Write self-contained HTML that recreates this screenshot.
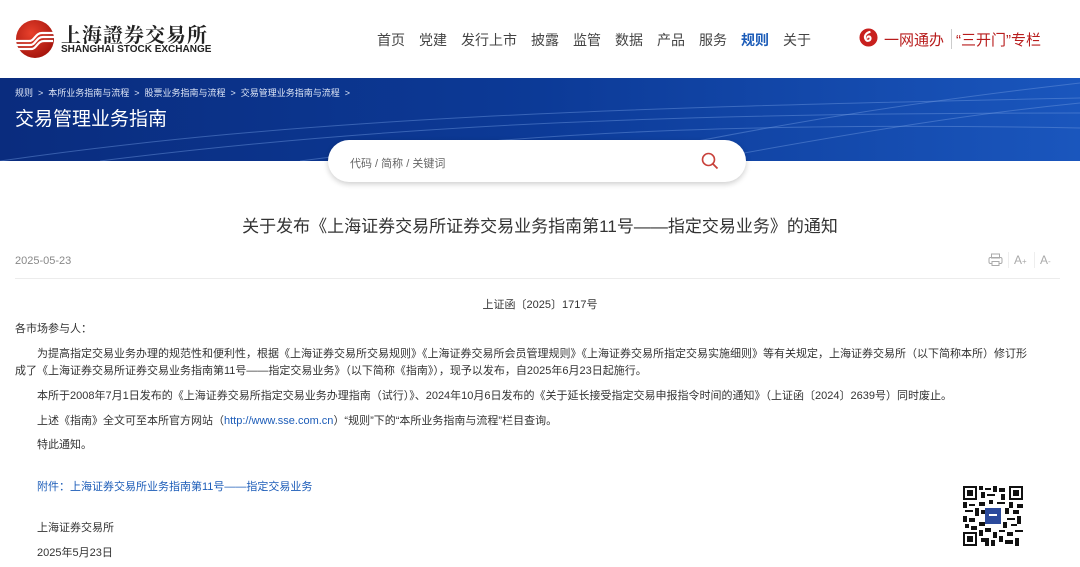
<!DOCTYPE html>
<html><head><meta charset="utf-8"><style>
*{margin:0;padding:0;box-sizing:border-box}
body{width:1080px;height:567px;overflow:hidden;background:#fff;font-family:"Liberation Sans","Noto Sans CJK SC",sans-serif;position:relative;color:#333}
.a{position:absolute;white-space:nowrap}
.nav span{margin-right:14px}
.t{font-size:11px;color:#333}
</style></head><body>
<svg class="a" style="left:15px;top:19px" width="40" height="40" viewBox="0 0 40 40">
<defs><radialGradient id="g" cx="40%" cy="35%" r="65%"><stop offset="0" stop-color="#e8412c"/><stop offset="1" stop-color="#a8160e"/></radialGradient></defs>
<circle cx="20" cy="20" r="19" fill="url(#g)"/>
<path d="M1 22 H14 C20 22 20 14 27 14 H39 M1 26 H15 C21 26 21 18 28 18 H39 M2 30 H16 C22 30 22 22 29 22 H38" stroke="#fff" stroke-width="2.2" fill="none"/>
</svg>
<div class="a" style="left:61px;top:19px;font-size:20px;font-weight:bold;letter-spacing:1px;color:#222;font-family:'Noto Serif CJK SC',serif">上海證券交易所</div>
<div class="a" style="left:61px;top:44px;font-size:10px;font-weight:bold;color:#222">SHANGHAI STOCK EXCHANGE</div>
<div class="a nav" style="left:377px;top:30px;font-size:14px;color:#444"><span>首页</span><span>党建</span><span>发行上市</span><span>披露</span><span>监管</span><span>数据</span><span>产品</span><span>服务</span><span style="color:#1c5cb8;font-weight:bold">规则</span><span>关于</span></div>
<svg class="a" style="left:859px;top:28px" width="19" height="19" viewBox="0 0 20 20"><circle cx="10" cy="10" r="9.5" fill="#c8201e"/><path d="M12 4 C7 5 5 9 7 12 C9 15 13 13 12 10 C11 8 8 9 9 11" stroke="#fff" stroke-width="2.2" fill="none"/></svg>
<div class="a" style="left:884px;top:29px;font-size:15px;color:#b81c1c">一网通办</div>
<div class="a" style="left:951px;top:29px;width:1px;height:20px;background:#ccc"></div>
<div class="a" style="left:956px;top:29px;font-size:15px;color:#b81c1c">“三开门”专栏</div>
<div class="a" style="left:0;top:78px;width:1080px;height:83px;background:linear-gradient(90deg,#0a2c7e 0%,#0c3a97 50%,#1a56bd 100%);overflow:hidden">
<svg width="1080" height="83" style="position:absolute;left:0;top:0"><g fill="none" stroke="#6f98e0" stroke-opacity=".45">
<path d="M0 83 C300 40 600 30 1080 20"/><path d="M100 83 C400 45 700 35 1080 35"/><path d="M300 83 C550 50 800 45 1080 50"/><path d="M600 83 C800 40 950 20 1080 5"/><path d="M700 83 C880 50 980 35 1080 25"/></g></svg>
<div class="a" style="left:15px;top:8px;font-size:9px;color:#dfe7f7">规则 &nbsp;&gt;&nbsp; 本所业务指南与流程 &nbsp;&gt;&nbsp; 股票业务指南与流程 &nbsp;&gt;&nbsp; 交易管理业务指南与流程 &nbsp;&gt;</div>
<div class="a" style="left:15px;top:26px;font-size:19px;color:#fff">交易管理业务指南</div>
</div>
<div class="a" style="left:328px;top:140px;width:418px;height:42px;background:#fff;border-radius:21px;box-shadow:0 2px 6px rgba(0,0,0,.2)"></div>
<div class="a" style="left:350px;top:155px;font-size:11px;color:#666">代码 / 简称 / 关键词</div>
<svg class="a" style="left:701px;top:152px" width="18" height="18" viewBox="0 0 18 18"><circle cx="7.5" cy="7.5" r="6" stroke="#c8403a" stroke-width="1.6" fill="none"/><path d="M12 12 L16.5 16.5" stroke="#c8403a" stroke-width="1.8"/></svg>
<div class="a" style="left:0;width:1080px;text-align:center;top:212px;font-size:17px;color:#333">关于发布《上海证券交易所证券交易业务指南第11号——指定交易业务》的通知</div>
<div class="a" style="left:15px;top:255px;font-size:11px;color:#888">2025-05-23</div>
<svg class="a" style="left:988px;top:253px" width="15" height="14" viewBox="0 0 15 14"><rect x="3.5" y="1" width="8" height="4" fill="none" stroke="#aaa"/><rect x="1" y="4.5" width="13" height="6" rx="1.5" fill="none" stroke="#aaa"/><rect x="4" y="8.5" width="7" height="4" fill="#fff" stroke="#aaa"/></svg>
<div class="a" style="left:1008px;top:252px;width:1px;height:16px;background:#eee"></div>
<div class="a" style="left:1014px;top:253px;font-size:12px;color:#aaa">A<span style="font-size:8px">+</span></div>
<div class="a" style="left:1034px;top:252px;width:1px;height:16px;background:#eee"></div>
<div class="a" style="left:1040px;top:253px;font-size:12px;color:#aaa">A<span style="font-size:8px">-</span></div>
<div class="a" style="left:15px;top:278px;width:1045px;height:1px;background:#ececec"></div>
<div class="a t" style="left:0;width:1080px;text-align:center;top:296px">上证函〔2025〕1717号</div>
<div class="a t" style="left:15px;top:320px">各市场参与人：</div>
<div class="a t" style="left:37px;top:345px">为提高指定交易业务办理的规范性和便利性，根据《上海证券交易所交易规则》《上海证券交易所会员管理规则》《上海证券交易所指定交易实施细则》等有关规定，上海证券交易所（以下简称本所）修订形</div>
<div class="a t" style="left:15px;top:362px">成了《上海证券交易所证券交易业务指南第11号——指定交易业务》（以下简称《指南》），现予以发布，自2025年6月23日起施行。</div>
<div class="a t" style="left:37px;top:387px">本所于2008年7月1日发布的《上海证券交易所指定交易业务办理指南（试行）》、2024年10月6日发布的《关于延长接受指定交易申报指令时间的通知》（上证函〔2024〕2639号）同时废止。</div>
<div class="a t" style="left:37px;top:412px">上述《指南》全文可至本所官方网站（<span style="color:#1c5cb8">http://www.sse.com.cn</span>）“规则”下的“本所业务指南与流程”栏目查询。</div>
<div class="a t" style="left:37px;top:436px">特此通知。</div>
<div class="a t" style="left:37px;top:478px;color:#1c5cb8">附件：上海证券交易所业务指南第11号——指定交易业务</div>
<div class="a t" style="left:37px;top:519px">上海证券交易所</div>
<div class="a t" style="left:37px;top:544px">2025年5月23日</div>
<svg class="a" style="left:963px;top:486px" width="60" height="60" viewBox="0 0 30 30" shape-rendering="crispEdges">
<g fill="#111"><path d="M0 0h7v7h-7zM23 0h7v7h-7zM0 23h7v7h-7z"/></g>
<g fill="#fff"><path d="M1 1h5v5h-5zM24 1h5v5h-5zM1 24h5v5h-5z"/></g>
<g fill="#111"><path d="M2 2h3v3h-3zM25 2h3v3h-3zM2 25h3v3h-3z"/>
<path d="M8 0h2v2h-2zM11 1h3v1h-3zM15 0h2v3h-2zM18 1h3v2h-3zM9 3h2v3h-2zM12 4h4v1h-4zM19 4h2v3h-2zM8 8h3v2h-3zM0 8h2v3h-2zM3 9h3v1h-3zM13 7h2v2h-2zM17 8h4v1h-4zM23 8h2v3h-2zM27 9h3v2h-3zM1 12h4v1h-4zM6 11h2v4h-2zM9 12h2v2h-2zM21 11h2v3h-2zM25 12h3v2h-3zM0 15h2v3h-2zM3 16h3v2h-3zM22 16h4v1h-4zM27 15h2v4h-2zM8 18h3v2h-3zM20 18h2v3h-2zM24 19h3v1h-3zM1 19h2v2h-2zM4 20h3v2h-3zM8 22h2v3h-2zM11 21h3v2h-3zM15 23h2v3h-2zM18 22h3v1h-3zM22 23h3v2h-3zM26 22h4v1h-4zM9 26h4v2h-4zM14 27h2v3h-2zM18 25h2v3h-2zM21 27h4v2h-4zM26 26h2v4h-2zM11 28h2v2h-2z"/></g>
<rect x="11" y="11" width="8" height="8" fill="#2b4a9c"/><rect x="13" y="14" width="4" height="1" fill="#fff"/>
</svg>
</body></html>
